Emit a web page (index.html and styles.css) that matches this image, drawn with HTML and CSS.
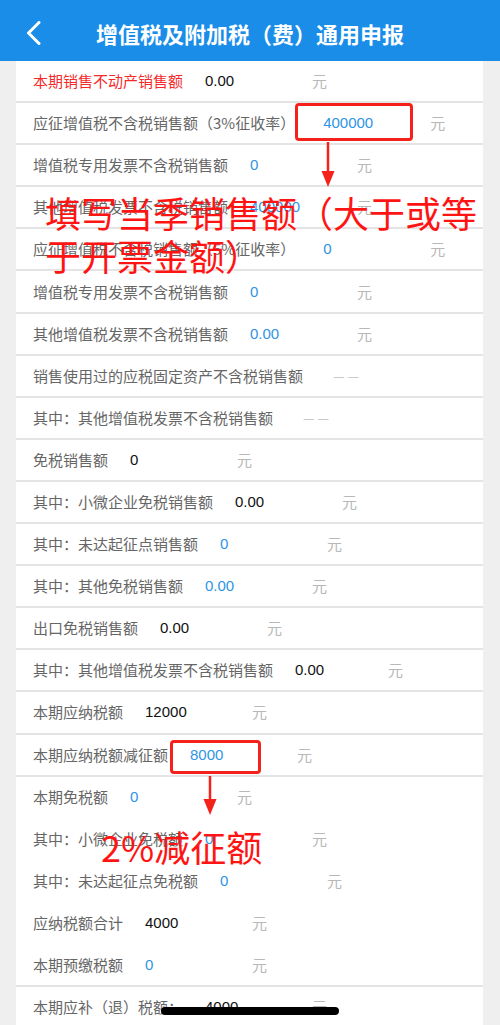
FILE: index.html
```html
<!DOCTYPE html>
<html lang="zh-CN">
<head>
<meta charset="utf-8">
<title>增值税及附加税（费）通用申报</title>
<link rel="stylesheet" href="styles.css">
</head>
<body>
<div class="page">
  <header class="topbar">
    <svg class="back" width="16" height="24" viewBox="0 0 16 24"><path d="M13 1.5 L2.5 12 L13 22.5" fill="none" stroke="#fff" stroke-width="3" stroke-linecap="round" stroke-linejoin="round"/></svg>
    <h1 class="title">增值税及附加税（费）通用申报</h1>
  </header>
  <main class="card">
    <div class="row"><span class="label red">本期销售不动产销售额</span><span class="val dark">0.00</span><span class="unit">元</span></div>
    <div class="row"><span class="label">应征增值税不含税销售额（3%征收率）</span><span class="val blue pad">400000</span><span class="unit">元</span></div>
    <div class="row"><span class="label">增值税专用发票不含税销售额</span><span class="val blue">0</span><span class="unit">元</span></div>
    <div class="row"><span class="label">其他增值税发票不含税销售额</span><span class="val blue">400000</span><span class="unit">元</span></div>
    <div class="row"><span class="label">应征增值税不含税销售额（5%征收率）</span><span class="val blue pad">0</span><span class="unit">元</span></div>
    <div class="row"><span class="label">增值税专用发票不含税销售额</span><span class="val blue">0</span><span class="unit">元</span></div>
    <div class="row"><span class="label">其他增值税发票不含税销售额</span><span class="val blue">0.00</span><span class="unit">元</span></div>
    <div class="row"><span class="label">销售使用过的应税固定资产不含税销售额</span><span class="dash">— —</span></div>
    <div class="row"><span class="label">其中：其他增值税发票不含税销售额</span><span class="dash">— —</span></div>
    <div class="row"><span class="label">免税销售额</span><span class="val dark">0</span><span class="unit">元</span></div>
    <div class="row"><span class="label">其中：小微企业免税销售额</span><span class="val dark">0.00</span><span class="unit">元</span></div>
    <div class="row"><span class="label">其中：未达起征点销售额</span><span class="val blue">0</span><span class="unit">元</span></div>
    <div class="row"><span class="label">其中：其他免税销售额</span><span class="val blue">0.00</span><span class="unit">元</span></div>
    <div class="row"><span class="label">出口免税销售额</span><span class="val dark">0.00</span><span class="unit">元</span></div>
    <div class="row"><span class="label">其中：其他增值税发票不含税销售额</span><span class="val dark narrow">0.00</span><span class="unit">元</span></div>
    <div class="row"><span class="label">本期应纳税额</span><span class="val dark">12000</span><span class="unit">元</span></div>
    <div class="row"><span class="label">本期应纳税额减征额</span><span class="val blue">8000</span><span class="unit">元</span></div>
    <div class="row"><span class="label">本期免税额</span><span class="val blue">0</span><span class="unit">元</span></div>
    <div class="row plain"><span class="label">其中：小微企业免税额</span><span class="val blue">0</span><span class="unit">元</span></div>
    <div class="row plain"><span class="label">其中：未达起征点免税额</span><span class="val blue">0</span><span class="unit">元</span></div>
    <div class="row plain"><span class="label">应纳税额合计</span><span class="val dark">4000</span><span class="unit">元</span></div>
    <div class="row"><span class="label">本期预缴税额</span><span class="val blue">0</span><span class="unit">元</span></div>
    <div class="row"><span class="label">本期应补（退）税额：</span><span class="val dark">4000</span><span class="unit">元</span></div>
  </main>

  <div class="mark box1"></div>
  <svg class="arrow arrow1" width="16" height="46" viewBox="0 0 16 46"><line x1="8" y1="0" x2="8" y2="32" stroke="#f5221b" stroke-width="2.5"/><path d="M1.5 29 L14.5 29 L8 45 Z" fill="#f5221b"/></svg>
  <p class="note note1">填写当季销售额（大于或等于开票金额）</p>

  <div class="mark box2"></div>
  <svg class="arrow arrow2" width="16" height="40" viewBox="0 0 16 40"><line x1="8" y1="0" x2="8" y2="26" stroke="#f5221b" stroke-width="2.5"/><path d="M1.5 23 L14.5 23 L8 39 Z" fill="#f5221b"/></svg>
  <p class="note note2">2%减征额</p>

  <div class="home-bar"></div>
</div>
</body>
</html>
```

FILE: styles.css
```css
html, body {
  margin: 0;
  padding: 0;
}
body {
  background: #efefef;
  font-family: "Noto Sans CJK SC", "Noto Sans", sans-serif;
}
.page {
  position: relative;
  width: 500px;
  height: 1025px;
  overflow: hidden;
  background: #efefef;
}
.topbar {
  height: 61px;
  background: #1a8de8;
  display: flex;
  align-items: center;
  justify-content: center;
  position: relative;
  padding-top: 4px;
  box-sizing: border-box;
}
.back {
  position: absolute;
  left: 26px;
  top: 21px;
}
.title {
  margin: 0;
  color: #fff;
  font-size: 22px;
  font-weight: 700;
  letter-spacing: 0;
  line-height: 1;
}
.card {
  background: #fff;
  margin: 0 17px 0 16px;
  display: flex;
  flex-direction: column;
}
.row {
  height: 42.1px;
  box-sizing: border-box;
  display: flex;
  align-items: center;
  padding: 0 0 1px 17px;
  border-bottom: 2px solid #e4e4e4;
  font-size: 15px;
  white-space: nowrap;
}
.row.plain {
  border-bottom-color: #fff;
}
.row:nth-child(18) {
  border-bottom-color: #fff;
}
.label {
  color: #666;
}
.label.red {
  color: #f42a2a;
}
.val {
  margin-left: 22px;
  width: 85px;
  font-family: "Liberation Sans", "Noto Sans", sans-serif;
  font-size: 15px;
}
.val.pad {
  margin-left: 28px;
}
.val.narrow {
  width: 71px;
}
.val.blue {
  color: #2f95e6;
}
.val.dark {
  color: #111;
}
.unit {
  margin-left: 22px;
  color: #b8b8b8;
}
.dash {
  margin-left: 30px;
  color: #bdbdbd;
  font-size: 13px;
}
.mark {
  position: absolute;
  border: 3px solid #f5221b;
  border-radius: 4px;
  box-sizing: border-box;
}
.box1 {
  left: 295px;
  top: 103px;
  width: 118px;
  height: 38px;
}
.box2 {
  left: 170px;
  top: 740px;
  width: 91px;
  height: 34px;
}
.arrow {
  position: absolute;
}
.arrow1 {
  left: 320px;
  top: 142px;
}
.arrow2 {
  left: 202px;
  top: 776px;
}
.note {
  position: absolute;
  margin: 0;
  color: #ff1414;
  font-size: 36px;
  line-height: 43px;
  font-weight: 400;
}
.note1 {
  left: 45px;
  top: 191px;
  width: 440px;
}
.note2 {
  left: 101px;
  top: 825px;
  font-family: "Noto Sans CJK SC", "Liberation Sans", sans-serif;
}
.home-bar {
  position: absolute;
  left: 161px;
  top: 1007px;
  width: 178px;
  height: 8px;
  border-radius: 4px;
  background: #000;
}
```
